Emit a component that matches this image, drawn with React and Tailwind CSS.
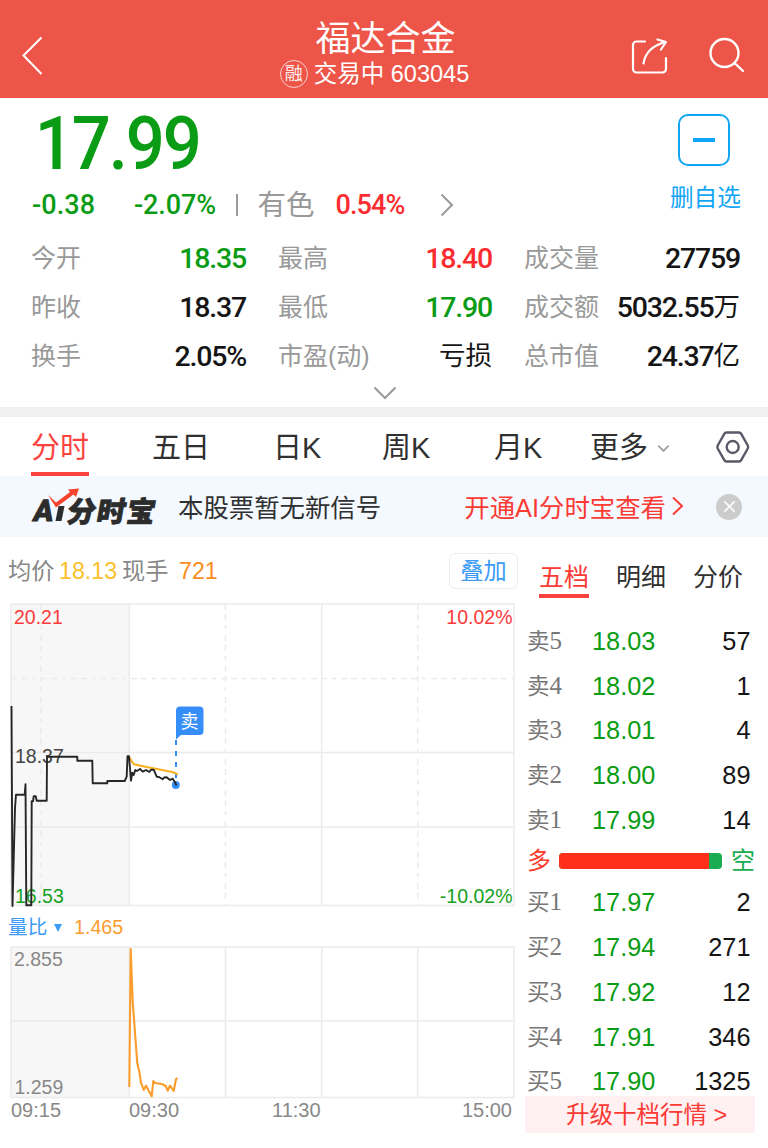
import { ChevronDown, X } from 'lucide-react';
import clsx from 'clsx';

const GREEN = 'text-[#0a9c14]';
const RED = 'text-[#fb2c30]';
const BLACK = 'text-[#151515]';

const stats = [
    { label: '今开', value: '18.35', color: GREEN },
    { label: '最高', value: '18.40', color: RED },
    { label: '成交量', value: '27759', color: BLACK },
    { label: '昨收', value: '18.37', color: BLACK },
    { label: '最低', value: '17.90', color: GREEN },
    { label: '成交额', value: '5032.55', unit: '万', color: BLACK },
    { label: '换手', value: '2.05%', color: BLACK },
    { label: '市盈(动)', unit: '亏损', color: BLACK },
    { label: '总市值', value: '24.37', unit: '亿', color: BLACK },
];

const sells = [
    ['5', '18.03', '57'],
    ['4', '18.02', '1'],
    ['3', '18.01', '4'],
    ['2', '18.00', '89'],
    ['1', '17.99', '14'],
];

const buys = [
    ['1', '17.97', '2'],
    ['2', '17.94', '271'],
    ['3', '17.92', '12'],
    ['4', '17.91', '346'],
    ['5', '17.90', '1325'],
];

function Header() {
    return (
        <header className="h-[98px] bg-[#ee5549] text-white flex justify-between pl-[22px] pr-[23px]">
            <svg className="mt-[36px]" width="22" height="40" viewBox="0 0 22 40" fill="none" stroke="currentColor" strokeWidth="2">
                <path d="M19.500 1.500 1.500 19.500l18 18.500" />
            </svg>
            <div className="flex flex-col items-center pl-[74px]">
                <h1 className="mt-[18px] h-[42px] leading-[42px] text-[35px] pl-[22px]">福达合金</h1>
                <div className="flex items-center h-[27px] gap-[6px]">
                    <span className="w-7 h-7 rounded-full border-[1.5px] border-white/80 flex items-center justify-center text-[18px] leading-none opacity-90">融</span>
                    <span className="text-[23.500px] leading-[27px] whitespace-nowrap pt-[2px]">交易中 603045</span>
                </div>
            </div>
            <div className="flex gap-[40px] mt-[37px]">
                <svg width="38" height="38" viewBox="0 0 38 38" fill="none" stroke="currentColor" strokeWidth="2.200" strokeLinecap="round" strokeLinejoin="round">
                    <path d="M14 4.500H5.500a3.500 3.500 0 0 0-3.500 3.500v24a3.500 3.500 0 0 0 3.500 3.500h26a3.500 3.500 0 0 0 3.500-3.500V21" />
                    <path d="M12.500 26.500C14 17 20.500 9 33.500 5.300" />
                    <path d="M26.500 2.500l8.500 2.500-5 7.500" />
                </svg>
                <svg width="36" height="38" viewBox="0 0 36 38" fill="none" stroke="currentColor" strokeWidth="2.400" strokeLinecap="round">
                    <circle cx="15.500" cy="16" r="14" />
                    <path d="M25.500 26l8.500 8" />
                </svg>
            </div>
        </header>
    );
}

function Quote() {
    return (
        <section className="h-[309px] bg-white">
            <div className="flex justify-between h-[135px] pl-8 pr-[27px]">
                <div>
                    <div className={clsx("h-[90px] leading-[91px] text-[74px] font-medium tracking-[-2.3px] origin-left scale-x-[0.93] font-['Roboto',sans-serif] pl-[3px]", GREEN)}>17.99</div>
                    <div className="flex items-center h-[34px] text-[27px] font-medium tracking-[-0.9px] font-['Roboto','Noto_Sans_CJK_SC',sans-serif]">
                        <span className={clsx('w-[102px] tracking-[0.1px]', GREEN)}>-0.38</span>
                        <span className={clsx('w-[102px] tracking-[-0.1px]', GREEN)}>-2.07%</span>
                        <span className="w-[1.500px] h-[22px] bg-[#9b9b9b] mr-5" />
                        <span className="w-[78px] pt-[2px] text-[28.500px] font-normal tracking-normal text-[#999]">有色</span>
                        <span className={clsx('w-[103px]', RED)}>0.54%</span>
                        <svg width="16" height="24" viewBox="0 0 16 24" fill="none" stroke="#999" strokeWidth="2">
                            <path d="M2.500 1.500 13 12 2.500 22.500" />
                        </svg>
                    </div>
                </div>
                <div className="flex flex-col items-center text-[#12a5f5] pt-4">
                    <div className="w-[52px] h-[52px] rounded-[10px] border-2 flex items-center justify-center mr-[2px]">
                        <span className="w-[22px] h-1 bg-[#12a5f5]" />
                    </div>
                    <span className="mt-4 text-[23.700px] leading-8">删自选</span>
                </div>
            </div>
            <div className="grid grid-cols-[215px_214px_216px] gap-x-8 pl-[31px]">
                {stats.map((s) => (
                    <div key={s.label} className="flex justify-between items-center h-[49px] whitespace-nowrap leading-[49px]">
                        <span className="text-[25px] text-[#999] pt-[2px]">{s.label}</span>
                        <span className={clsx('flex items-center', s.color)}>
                            <span className="pt-px text-[28.500px] font-medium tracking-[-1.200px] font-['Roboto',sans-serif]">{s.value}</span>
                            <span className="pt-[2px] text-[26.500px]">{s.unit}</span>
                        </span>
                    </div>
                ))}
            </div>
            <svg className="ml-[373px] mt-[6px]" width="24" height="14" viewBox="0 0 24 14" fill="none" stroke="#999" strokeWidth="2">
                <path d="M1.500 1.500 12 12 22.500 1.500" />
            </svg>
        </section>
    );
}

function PeriodTabs() {
    return (
        <nav className="h-[59px] grid grid-cols-[121px_121px_109px_112px_96px_126px_34px] pl-[31px] text-[29px] leading-[63px] text-[#303030] whitespace-nowrap">
            <span className="w-[58px] h-[59px] border-b-4 border-[#fb4440] text-[#fb4440]">分时</span>
            <span>五日</span>
            <span>日K</span>
            <span>周K</span>
            <span>月K</span>
            <span className="flex items-center gap-[6px]">
                更多
                <ChevronDown size={19} strokeWidth={2} className="text-[#999]" />
            </span>
            <svg className="mt-[14px]" width="34" height="32" viewBox="0 0 34 32" fill="none" stroke="#5a5967" strokeWidth="2.400" strokeLinejoin="round">
                <path d="M10.500 1.500h12.500a2.500 2.500 0 0 1 2.200 1.300L31.500 14a4 4 0 0 1 0 4L25.200 29.200a2.500 2.500 0 0 1-2.200 1.300H10.500a2.500 2.500 0 0 1-2.200-1.300L2 18a4 4 0 0 1 0-4L8.300 2.800a2.500 2.500 0 0 1 2.200-1.300z" />
                <circle cx="16.700" cy="16" r="6" />
            </svg>
        </nav>
    );
}

function AiBanner() {
    return (
        <div className="h-[61px] bg-[#f3f9fe] flex items-center pl-[20px] pr-[26px] text-[25.400px] whitespace-nowrap">
            <svg width="150" height="56" viewBox="-10 -8 150 56" className="mr-[8px]" fill="#2c2c2c">
                <g transform="skewX(-10)" fontWeight="900">
                    <text x="8" y="34" fontSize="30" textLength="20" lengthAdjust="spacingAndGlyphs" stroke="#2c2c2c" strokeWidth="0.800" fontFamily="Roboto, sans-serif">A</text>
                    <text x="42" y="35" fontSize="28.500" stroke="#2c2c2c" strokeWidth="0.800" textLength="88" fontFamily="Noto Sans CJK SC, sans-serif">分时宝</text>
                </g>
                <path d="M28.500 19h6l-3 15h-6z" />
                <path d="M18 8l8 7.500L40 5l-2-2.500 11-1-3 8.500-2.500-2.500L26 20.500z" fill="#f5432e" />
            </svg>
            <span className="text-[#303030] pt-[3px]">本股票暂无新信号</span>
            <span className="flex items-center ml-auto text-[#fb3a34] pt-[3px]">
                开通AI分时宝查看
                <svg width="14" height="20" viewBox="0 0 14 20" fill="none" stroke="currentColor" strokeWidth="2" className="ml-1 -mt-[3px]">
                    <path d="M3 1.500 12 10 3 18.500" />
                </svg>
            </span>
            <span className="ml-[32px] w-[26px] h-[26px] rounded-full bg-[#ccc] text-white flex items-center justify-center">
                <X size={19} strokeWidth={2} />
            </span>
        </div>
    );
}

function PriceChart() {
    return (
        <svg width="518" height="310" viewBox="0 600 518 310" fill="none" className="block">
            <rect x="11" y="604" width="118" height="302" fill="#f7f7f7" />
            <g stroke="#ebebeb" strokeWidth="1.500">
                <path d="M11 604H514V905.500H11zM11 752.500H514M11 827H514M129.300 604V905M321.700 604V905" />
                <path d="M11 678.500H514" strokeDasharray="6 4 6 5 4 5" />
                <path d="M41 604V905M225.500 604V905M417.700 604V905" strokeDasharray="6 4 6 5 4 6" />
            </g>
            <g fontSize="19.500">
                <text x="14" y="624" fill="#fb3a3c">20.21</text>
                <text x="15" y="763" fill="#444">18.37</text>
                <text x="15" y="902.500" fill="#16a022">16.53</text>
                <text x="512.500" y="624" fill="#fb3a3c" textAnchor="end">10.02%</text>
                <text x="512.500" y="902.500" fill="#16a022" textAnchor="end">-10.02%</text>
            </g>
            <path d="M176 740V785" stroke="#368ef9" strokeWidth="2" strokeDasharray="5 6" />
            <path d="M180 706.500h19.500a4 4 0 0 1 4 4v20.500a4 4 0 0 1-4 4H181l-5 4.500V710.500a4 4 0 0 1 4-4z" fill="#368ef9" />
            <text x="180.500" y="728" fontSize="18" fill="#fff">卖</text>
            <path d="M129 756.700l3 5 2 2.600 12.700 2.700 16.600 3.300 10 2 4.700 2.400" stroke="#f8ae22" strokeWidth="2" />
            <circle cx="175.800" cy="785" r="4" fill="#368ef9" />
            <path
                d="M11.500 706L12.500 906L15 808L16 794.700H24.700L25.500 784.300L26.300 905.300H31.300L31.700 801.300H33L33.700 796.300H35.700L36.700 800.700H46.700L47 756.700H77.300V760.700H92.300L92.700 783.300H107.300V781H124.700L126.700 776.700L127.500 756.300H129L131 780.700L132.300 772.700L133.700 775L135.300 770L137 771L140 769L142.700 771.700L146 770L149.300 772L151 769.700H153.700L156.700 776.700L159 777L162.700 779.300L164 777.500L166.700 777.300L170 780L172.700 778.700L174.700 781.700L176.500 785.500"
                stroke="#262626"
                strokeWidth="1.900"
                strokeLinejoin="round"
            />
        </svg>
    );
}

function VolumeRatioChart() {
    return (
        <svg width="518" height="155" viewBox="0 945 518 155" fill="none" className="block">
            <rect x="11" y="947" width="118" height="150" fill="#f7f7f7" />
            <path d="M11 947H514V1097.500H11zM11 1021H514M129.300 947V1097M225.500 947V1097M321.700 947V1097M417.700 947V1097" stroke="#ebebeb" strokeWidth="1.500" />
            <g fontSize="19.500" fill="#888">
                <text x="14" y="966">2.855</text>
                <text x="14.500" y="1093.500">1.259</text>
            </g>
            <path
                d="M129.300 1087L130.700 949L132.700 1002L137.300 1063.300L139.300 1071.700L141 1082.700L143.700 1090L146 1085.700L148.300 1090L151.700 1096.300L153.300 1081L155 1083L161.700 1084L165.700 1086L167.700 1090.700L170 1085.700L173.700 1091L176 1079.300L177.500 1078"
                stroke="#fb9c2c"
                strokeWidth="2.100"
                strokeLinejoin="round"
            />
        </svg>
    );
}

function ChartPanel() {
    return (
        <div className="w-[518px] shrink-0 whitespace-nowrap">
            <div className="flex h-[63px] pt-4 pl-[8px] text-[23.200px] leading-[37px]">
                <span className="w-[51px] text-[#888]">均价</span>
                <span className="w-[63px] text-[#fbc02a]">18.13</span>
                <span className="w-[57px] text-[#888]">现手</span>
                <span className="text-[#fb8c1e]">721</span>
                <button className="ml-auto w-[69px] h-[36px] leading-[34px] rounded-md border-[1.500px] border-[#ececec] text-[#3b9bf5]">叠加</button>
            </div>
            <PriceChart />
            <div className="flex items-center h-[35px] pl-[8px] text-[19.700px] text-[#3b9bf5]">
                <span className="w-[46px]">量比</span>
                <span className="w-0 h-0 border-x-[4.500px] border-x-transparent border-t-[8px] border-t-[#3b9bf5] mr-3" />
                <span className="text-[#fb9c2c]">1.465</span>
            </div>
            <VolumeRatioChart />
            <div className="flex pl-[11px] pr-[6px] text-[20px] leading-[21px] text-[#888]">
                <span className="w-[118px]">09:15</span>
                <span className="w-[143px]">09:30</span>
                <span>11:30</span>
                <span className="ml-auto">15:00</span>
            </div>
        </div>
    );
}

function OrderRow({ side, row }) {
    const [level, price, volume] = row;
    return (
        <div className="flex h-[44.700px] leading-[44.700px] text-[25.300px]">
            <span className="w-[65px] text-[#777] text-[22.500px] font-['Liberation_Serif','Noto_Sans_CJK_SC',serif]">
                {side}<span className="text-[25px]">{level}</span>
            </span>
            <span className={GREEN}>{price}</span>
            <span className={clsx('ml-auto', BLACK)}>{volume}</span>
        </div>
    );
}

function OrderBook() {
    return (
        <div className="flex-1 pl-[9px]">
            <div className="flex gap-[27px] h-[61px] pl-[12px] pt-[19px] text-[25px] leading-[42px] text-[#303030] whitespace-nowrap">
                <span className="h-[42px] border-b-4 border-[#fb4440] text-[#fb3a34]">五档</span>
                <span>明细</span>
                <span>分价</span>
            </div>
            <div className="pt-[21px] pr-[17.500px]">
                {sells.map((row) => (
                    <OrderRow key={row[0]} side="卖" row={row} />
                ))}
            </div>
            <div className="flex items-center h-[37px] pr-[13px] text-[24px]">
                <span className="w-8 pt-px text-[#fb3a2c]">多</span>
                <span className="flex flex-1 h-4 rounded overflow-hidden bg-[#1bab50] mr-[9px]">
                    <span className="w-[150px] bg-[#ff2f1c]" />
                </span>
                <span className="pt-px text-[#1bab50]">空</span>
            </div>
            <div className="pr-[17.500px] pt-[1px]">
                {buys.map((row) => (
                    <OrderRow key={row[0]} side="买" row={row} />
                ))}
            </div>
            <div className="-mt-[8px] -ml-[2px] w-[230px] h-[37px] bg-[#fff0f1] text-[#fb3a34] text-[23.500px] leading-[38px] pl-[41px] whitespace-nowrap">
                升级十档行情 &gt;
            </div>
        </div>
    );
}

export default function App() {
    return (
        <div lang="zh-CN" className="w-[768px] h-[1148px] overflow-hidden bg-white font-['Liberation_Sans','Noto_Sans_CJK_SC',sans-serif]">
            <Header />
            <Quote />
            <div className="h-[10px] bg-[#f1f1f1]" />
            <PeriodTabs />
            <AiBanner />
            <main className="flex">
                <ChartPanel />
                <OrderBook />
            </main>
        </div>
    );
}
